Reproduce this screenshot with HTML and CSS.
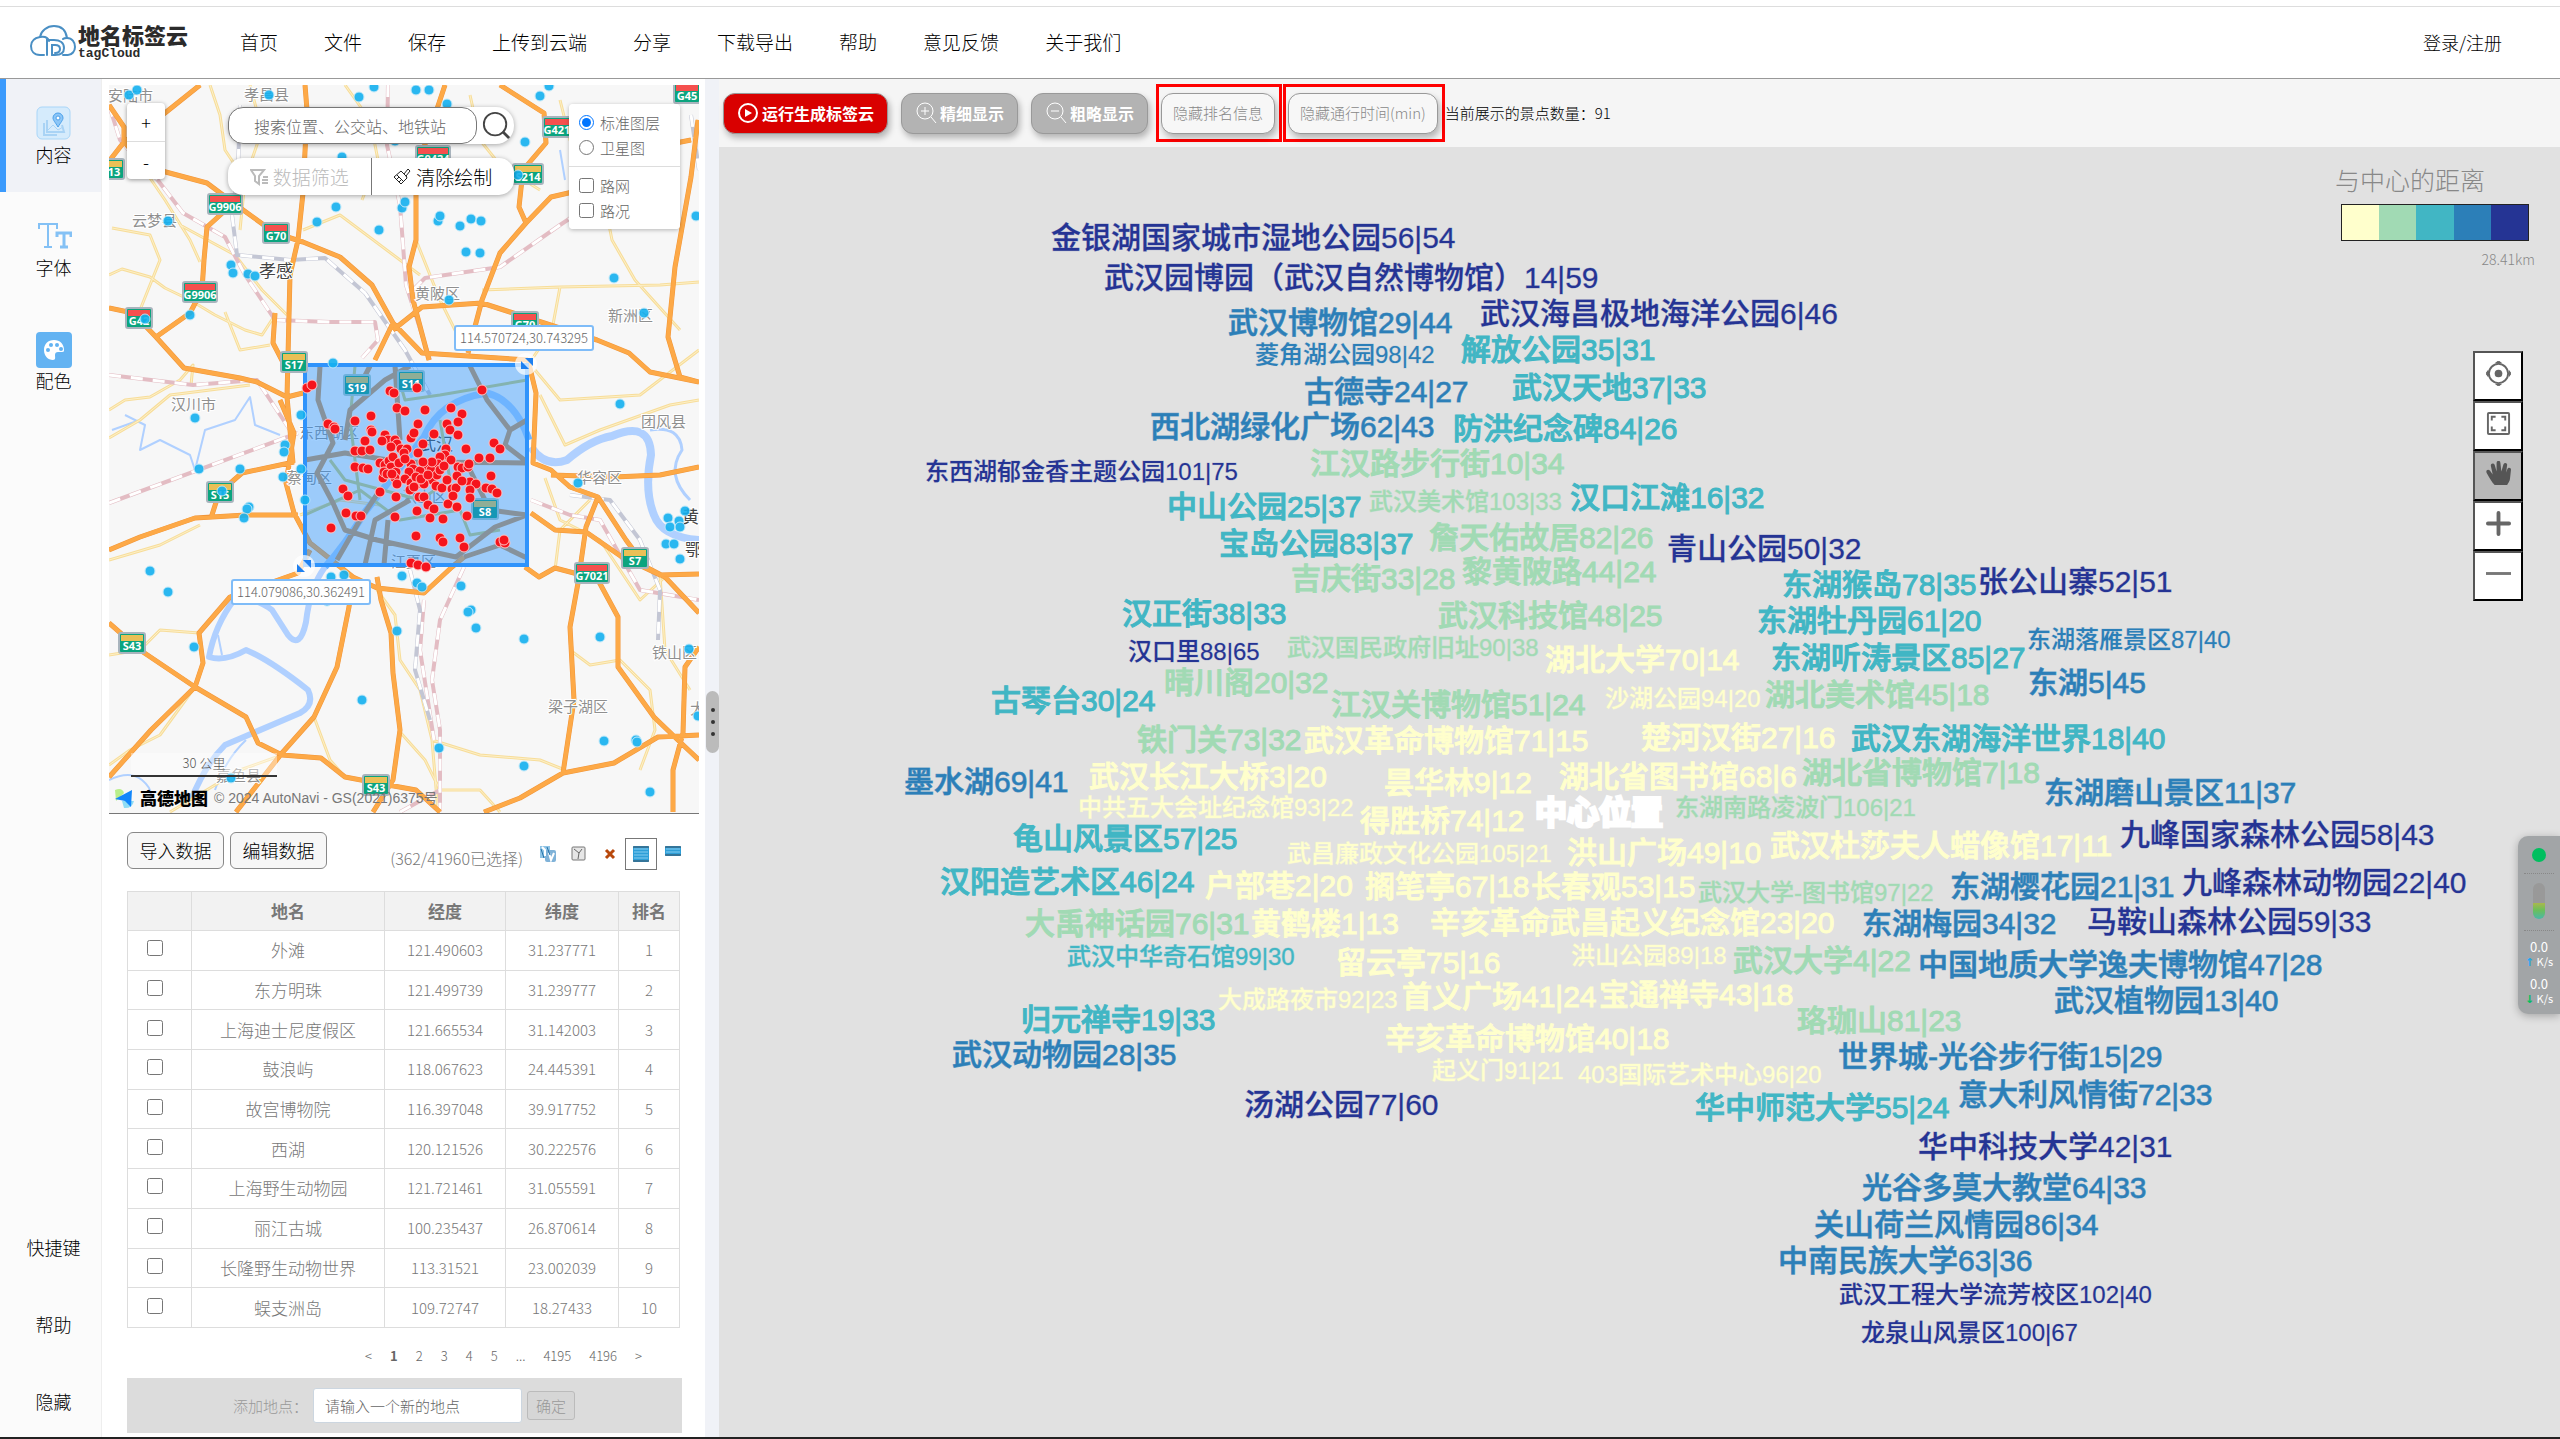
FILE: index.html
```html
<!DOCTYPE html>
<html lang="zh-CN">
<head>
<meta charset="utf-8">
<title>地名标签云</title>
<meta name="viewport" content="width=device-width, initial-scale=1">
<link rel="stylesheet" href="styles.css">
</head>
<body>
<header class="topbar">
  <a class="brand" href="#">
    <svg class="brand-mark" viewBox="0 0 46 32" fill="none" stroke="#4a8fc4" stroke-width="2" stroke-linecap="round">
      <path d="M14 30H10C4 30 1 26 1 21c0-5 4-8 9-9C11 6 17 1 24 1c8 0 12 5 13 12"/>
      <path d="M10 12c5-1 8 1 9 4"/>
      <path d="M33 30h5c4 0 7-4 7-8 0-5-3-9-8-9-2 0-3 0-4 1"/>
      <path d="M17 30V15h7c6 0 10 3 10 8s-4 7-9 7h-3"/>
      <path d="M22 30V20h3c3 0 5 1 5 4s-2 4-5 4"/>
    </svg>
    <span class="brand-text"><strong>地名标签云</strong><small>tagCloud</small></span>
  </a>
  <nav class="menu">
    <a href="#">首页</a><a href="#">文件</a><a href="#">保存</a><a href="#">上传到云端</a><a href="#">分享</a><a href="#">下载导出</a><a href="#">帮助</a><a href="#">意见反馈</a><a href="#">关于我们</a>
  </nav>
  <a class="login" href="#">登录/注册</a>
</header>

<main class="workspace">
  <nav class="rail">
    <a class="rail-item active" href="#">
      <svg viewBox="0 0 36 36"><rect x="1" y="1" width="33" height="32" rx="5" fill="#d5ebfc" stroke="#a9d6f8"/><path d="M8 17v12h13M11 14v12h17l-2-7" fill="none" stroke="#a9d3f5" stroke-width="2"/><path d="M12 24l5-5 5 5 5-3" fill="none" stroke="#a9d3f5"/><path d="M22 21c-3-5-5-7-5-9a5 5 0 0 1 10 0c0 2-2 4-5 9z" fill="#8cc6f7" stroke="#4ba0ea"/><circle cx="22" cy="12" r="2" fill="#fff" stroke="#4ba0ea"/></svg>
      <span>内容</span>
    </a>
    <a class="rail-item" href="#">
      <svg viewBox="0 0 36 36" fill="none" stroke="#84c1f5" stroke-width="2"><path d="M3 10V5h18v5M12 5v22M8 28h8"/><path d="M21 18v-4h14v4M28 14v13M24 28h8" stroke-width="3"/></svg>
      <span>字体</span>
    </a>
    <a class="rail-item" href="#">
      <svg viewBox="0 0 36 36"><rect width="36" height="36" rx="4" fill="#63b3f2"/><path d="M18 8c-6 0-10 4-10 10s4 10 9 10c3 0 2-3 2-5s1-3 3-3h4c2 0 2-1 2-2 0-6-4-10-10-10z" fill="#fff"/><g fill="#63b3f2"><circle cx="12" cy="18" r="2"/><circle cx="15" cy="13" r="2"/><circle cx="21" cy="13" r="2"/><circle cx="25" cy="17" r="2"/></g></svg>
      <span>配色</span>
    </a>
    <div class="rail-foot"><a href="#">快捷键</a><a href="#">帮助</a><a href="#">隐藏</a></div>
  </nav>

  <section class="panel">
    <div class="map">
      <svg class="map-art" viewBox="109 85 590 728">
        <defs>
          <marker id="spot" markerUnits="userSpaceOnUse" markerWidth="12" markerHeight="12" refX="6" refY="6" viewBox="0 0 12 12"><circle cx="6" cy="6" r="5" fill="#14b1f0" stroke="#bfe9fb"/></marker>
          <marker id="pick" markerUnits="userSpaceOnUse" markerWidth="12" markerHeight="12" refX="6" refY="6" viewBox="0 0 12 12"><circle cx="6" cy="6" r="5" fill="#f5141c" stroke="#ffc4c4"/></marker>
          <path id="major" d="M305 85L307 110 303 193 298 240 290 275 287 397 293 463M275 313L273 343 287 370M445 85L430 130 416 170 416 240 409 267 413 300 429 360M500 85L544 113 546 143 523 170 519 207 526 223 500 253 482 300 468 353M526 223L551 197 590 188 640 150 691 140M698 120L691 177 675 267 668 337 680 377 699 382M109 105L124 127 124 142 147 167 207 183 239 207 275 233 303 242 340 257 372 285 393 323 422 353 528 360M200 85L165 113 124 142 110 160M229 207L207 227 204 260 202 290 190 313 156 337M109 308L133 313 156 337 184 368 240 378 257 382 287 397 303 393M393 323L375 360M393 330L422 307 482 303 510 312 597 340 629 353 650 372 699 382M528 360L536 393 533 463 551 470 570 487 598 497 626 540 646 567 665 577 699 613M551 475L614 477 660 475 699 467M598 497L586 527 578 583 570 627 574 700 563 773M531 513L555 530 586 532 622 557 660 575 699 574M525 567L539 577 555 568 574 573 598 580 618 617 618 667 654 717 681 743 699 760M484 812L520 798 563 773 614 763 658 737 699 735M699 647L685 667 683 733 673 770 673 812M109 623L140 650 195 687 246 717 258 743 282 755 321 758 345 777 377 783 416 790 440 812M109 777L151 730 195 687 203 663 199 633 230 597 298 573 310 550M236 812L282 753 314 717 337 667 349 607 353 577M377 577L381 600 391 633 393 673 400 730 393 780 373 812M109 550L140 537 195 518 246 515 298 515M211 518L219 493 242 473 294 462M280 400L294 433 286 483 294 513 310 543 353 577 377 588 424 593 452 567 464 557"/>
          <path id="minor" d="M109 275L122 269 150 277 165 288 190 300 215 315 245 330 262 335 275 315M150 178L165 200 190 240 200 262M112 228L150 235 160 260 140 310M180 225L235 255 262 290 287 315M210 85L220 115 225 150 245 180 240 230M303 230L340 215 420 275M225 312L240 350 270 345M250 85L262 130 250 165M345 85L370 120 378 160 362 200M470 95L480 140 500 165 540 190M560 100L570 140 600 180 612 240 635 280 680 330M416 240L440 300 465 350M482 290L560 287 660 285 699 282M560 287L552 330 530 362M109 410L125 400 150 397 180 380 193 365 191 385M109 438L140 420 170 395 250 385M540 395L565 445 600 430 670 405 699 400M535 370L560 400 640 395 699 350M545 478L560 520 600 540 640 600 665 577M660 575L665 650 690 690M377 590L395 615 400 660 420 690 432 740 438 812M109 655L140 650 160 630 199 633M195 687L160 735 130 750 109 765M314 717L330 760 345 777M432 740L480 755 540 760 565 770M440 790L480 790 500 812M570 650L590 665 620 660 650 690 655 730 640 770M109 560L160 545 200 525M300 515L340 500 380 505M282 755L240 770 170 812M555 570L560 530 590 500M400 732L425 760 440 790"/>
          <path id="rail" d="M109 375L193 385 257 380 290 430M109 503L298 433M388 85L387 145 400 205 406 285 430 360M150 170L183 213 225 237 245 275 275 320 330 322 375 322 378 340 362 358M413 290L425 278 500 267 560 225 590 205M109 105L120 140 150 175M464 567L440 620 432 680 440 730 440 812M424 600L420 650 434 740M531 500L570 515 600 520 640 590 699 600M400 812L440 790"/>
          <path id="rail2" d="M240 105L238 170 232 215 237 255 290 260 325 258 365 293 405 350 430 395M691 115L699 170M410 570L420 610 415 670 430 720M570 495L610 500 640 540 660 590 658 640"/>
          <path id="spots" d="M129 95L137 90 269 95 359 97 374 87 416 90 429 90 447 104 540 96 549 86 525 142 342 157 395 141 518 175 336 207 317 222 379 230 402 208 405 202 438 221 440 216 460 226 471 219 481 221 466 252 480 253 168 221 231 265 233 273 248 274 255 276 190 315 145 319 449 300 614 278 644 313 696 216 333 363 195 418 301 415 285 445 284 452 199 469 240 469 301 469 283 477 222 491 305 500 249 507 247 509 244 518 620 404 578 483 150 571 168 592 194 647 331 577 344 575 402 576 417 583 422 587 461 586 471 610 468 612 476 628 397 631 524 639 600 637 362 700 439 748 524 766 604 741 636 740 637 742 650 792 231 778 689 649 685 511 668 518 679 521 670 527 680 527 666 544 674 544 680 559 698 716 327 601"/>
          <path id="picks" d="M307 388L312 385 390 391 394 393 417 388 482 390 397 408 405 411 425 410 451 408 462 414 328 424 334 427 335 429 355 421 371 416 371 430 372 432 418 424 447 424 458 422 450 430 458 435 365 441 385 435 388 440 382 441 395 440 397 444 411 438 414 433 423 444 434 434 355 451 362 451 370 450 391 447 401 449 407 449 404 453 418 453 446 449 445 455 466 449 494 443 500 449 440 457 451 460 479 458 490 458 355 467 363 468 368 469 380 463 385 465 389 461 391 467 393 457 396 472 399 463 411 464 413 469 409 472 427 467 438 464 431 470 420 471 458 467 462 468 468 467 469 464 457 476 383 478 395 478 405 479 432 480 437 475 436 486 411 483 417 484 424 484 442 488 452 489 456 488 470 482 476 484 470 490 491 476 486 488 492 489 497 493 343 489 348 496 380 492 396 497 410 490 419 497 424 497 428 505 417 511 434 509 448 504 457 507 453 496 470 498 346 513 356 516 361 516 395 517 430 518 443 519 467 516 331 528 416 536 440 538 443 542 460 538 464 547 500 542 505 543 504 540 411 563 418 565 426 567 384 472 387 474 392 474 416 477 421 479 428 475 440 470 444 466 405 459 447 480 462 481 397 484 414 487 432 462 423 462"/>
        </defs>
        <rect x="109" y="85" width="590" height="728" fill="#f7f7f7"/>
        <g fill="none" stroke="#b0d0ff" stroke-linejoin="round">
          <path stroke-width="8" d="M531 447Q545 468 567 460Q590 440 612 436Q650 420 651 455Q644 490 654 515Q662 537 699 540"/>
          <path stroke-width="3" d="M650 430Q680 425 682 450Q665 475 690 500"/>
          <path stroke-width="6" d="M325 567Q310 587 306 622Q300 650 288 635L272 610Q255 596 234 600Q215 625 209 657Q225 662 246 650Q270 660 308 690Q315 705 300 713L225 745Q205 765 191 800"/>
          <path stroke-width="2" d="M218 635L222 655M246 740Q225 760 215 790M109 780Q130 770 142 780T150 800M125 415L145 425 140 450 160 440 190 455 195 470 205 430 235 420 250 397 255 425 280 435M112 430L140 420M560 150L565 180"/>
        </g>
        <g fill="none" stroke-linejoin="round">
          <use href="#minor" stroke="#f7dd9a" stroke-width="3"/><use href="#minor" stroke="#fdf0c8" stroke-width="1"/>
          <use href="#rail" stroke="#e3bcc3" stroke-width="4"/><use href="#rail" stroke="#fff" stroke-width="3" stroke-dasharray="12 10"/>
          <use href="#rail2" stroke="#c3c6d4" stroke-width="4"/><use href="#rail2" stroke="#fff" stroke-width="3" stroke-dasharray="12 10"/>
          <use href="#major" stroke="#f1963a" stroke-width="5"/><use href="#major" stroke="#fda947" stroke-width="4"/>
        </g>
        <g class="place">
          <text x="108" y="101">安陆市</text><text x="244" y="100">孝昌县</text><text x="132" y="226">云梦县</text><text class="city" x="259" y="277">孝感</text><text x="415" y="299">黄陂区</text><text x="608" y="321">新洲区</text><text x="171" y="410">汉川市</text><text x="641" y="427">团风县</text><text x="299" y="438">东西湖区</text><text class="city" x="419" y="450">武汉</text><text x="287" y="483">蔡甸区</text><text x="402" y="502">洪山区</text><text x="391" y="567">江夏区</text><text x="577" y="483">华容区</text><text class="city" x="682" y="523">黄冈</text><text class="city" x="685" y="556">鄂州</text><text x="652" y="658">铁山区</text><text x="548" y="712">梁子湖区</text><text x="690" y="714">大冶</text><text x="216" y="781">嘉鱼县</text>
        </g>
        <rect x="305" y="365" width="222" height="200" fill="#1e90ff" fill-opacity=".42"/>
        <g fill="none" stroke-linejoin="round">
          <path stroke="#6eb4ff" stroke-width="7" d="M325 567Q345 545 365 512L424 437Q440 400 487 393Q515 400 529 440"/>
          <path stroke="#84b3b0" stroke-width="3" d="M395 366L405 400 440 395 527 380M305 515L360 490 400 520 460 510 470 535 500 530M330 460L345 480 420 500 480 460M355 366L350 420 360 500M440 420L450 480"/>
          <path stroke="#86929c" stroke-width="5" d="M320 366L318 400 333 443 317 473 333 503 345 530 377 540 456 557 495 527 527 515M305 460L345 453 400 462 527 463M345 440L350 410 385 380 410 366M370 366L355 395M470 366L487 400 510 430 505 445 527 462M510 430L527 420M365 565L375 520 410 500M337 560L360 520 380 490M384 565L388 520M470 470L490 510 527 515M464 557L500 545 527 558M395 366L400 440"/>
        </g>
        <rect x="305" y="365" width="222" height="200" fill="none" stroke="#2f93fb" stroke-width="4"/>
        <g class="shield">
          <g transform="translate(687 93)"><rect x="-13" y="-10" width="26" height="20" rx="2"/><path d="M-11-8h22v6h-22z"/><text y="7">G45</text></g>
          <g transform="translate(560 127)"><rect x="-17" y="-10" width="34" height="20" rx="2"/><path d="M-15-8h30v6h-30z"/><text y="7">G4213</text></g>
          <g transform="translate(433 156)"><rect x="-17" y="-10" width="34" height="20" rx="2"/><path d="M-15-8h30v6h-30z"/><text y="7">G0424</text></g>
          <g transform="translate(225 204)"><rect x="-17" y="-10" width="34" height="20" rx="2"/><path d="M-15-8h30v6h-30z"/><text y="7">G9906</text></g>
          <g transform="translate(276 233)"><rect x="-13" y="-10" width="26" height="20" rx="2"/><path d="M-11-8h22v6h-22z"/><text y="7">G70</text></g>
          <g transform="translate(200 292)"><rect x="-17" y="-10" width="34" height="20" rx="2"/><path d="M-15-8h30v6h-30z"/><text y="7">G9906</text></g>
          <g transform="translate(139 318)"><rect x="-13" y="-10" width="26" height="20" rx="2"/><path d="M-11-8h22v6h-22z"/><text y="7">G42</text></g>
          <g transform="translate(525 322)"><rect x="-13" y="-10" width="26" height="20" rx="2"/><path d="M-11-8h22v6h-22z"/><text y="7">G70</text></g>
          <g transform="translate(592 573)"><rect x="-17" y="-10" width="34" height="20" rx="2"/><path d="M-15-8h30v6h-30z"/><text y="7">G7021</text></g>
          <g class="prov">
            <g transform="translate(111 169)"><rect x="-13" y="-10" width="26" height="20" rx="2"/><path d="M-11-8h22v6h-22z"/><text y="7">S13</text></g>
            <g transform="translate(528 174)"><rect x="-15" y="-10" width="30" height="20" rx="2"/><path d="M-13-8h26v6h-26z"/><text y="7">S214</text></g>
            <g transform="translate(294 362)"><rect x="-13" y="-10" width="26" height="20" rx="2"/><path d="M-11-8h22v6h-22z"/><text y="7">S17</text></g>
            <g transform="translate(220 492)"><rect x="-13" y="-10" width="26" height="20" rx="2"/><path d="M-11-8h22v6h-22z"/><text y="7">S15</text></g>
            <g transform="translate(635 558)"><rect x="-13" y="-10" width="26" height="20" rx="2"/><path d="M-11-8h22v6h-22z"/><text y="7">S7</text></g>
            <g transform="translate(132 643)"><rect x="-13" y="-10" width="26" height="20" rx="2"/><path d="M-11-8h22v6h-22z"/><text y="7">S43</text></g>
            <g transform="translate(376 785)"><rect x="-13" y="-10" width="26" height="20" rx="2"/><path d="M-11-8h22v6h-22z"/><text y="7">S43</text></g>
          </g>
          <g class="inside">
            <g transform="translate(357 385)"><rect x="-13" y="-10" width="26" height="20" rx="2"/><path d="M-11-8h22v6h-22z"/><text y="7">S19</text></g>
            <g transform="translate(411 381)"><rect x="-13" y="-10" width="26" height="20" rx="2"/><path d="M-11-8h22v6h-22z"/><text y="7">S11</text></g>
            <g transform="translate(485 509)"><rect x="-13" y="-10" width="26" height="20" rx="2"/><path d="M-11-8h22v6h-22z"/><text y="7">S8</text></g>
          </g>
        </g>
        <use href="#spots" class="spots"/>
        <use href="#picks" class="picks"/>
        <g transform="translate(526 364)"><circle r="11" fill="#fff" fill-opacity=".7"/><path d="M-5-3v8h8zM-1-6h8v8z" fill="#1e80f0"/></g>
        <g transform="translate(304 566)"><circle r="11" fill="#fff" fill-opacity=".7"/><path d="M-7-2v8h8zM-1-6h8v8z" fill="#1e80f0"/></g>
      </svg>
      <output class="coord coord-ne">114.570724,30.743295</output>
      <output class="coord coord-sw">114.079086,30.362491</output>
      <div class="zoombox"><button type="button">+</button><button type="button">-</button></div>
      <form class="search">
        <input type="text" aria-label="搜索" placeholder="搜索位置、公交站、地铁站">
        <button type="button" aria-label="搜索"><svg viewBox="0 0 30 30" fill="none" stroke="#444" stroke-width="2"><circle cx="14" cy="13" r="12"/><path d="M22 21l7 7" stroke-width="3"/></svg></button>
      </form>
      <div class="draw-tools">
        <button type="button" disabled><svg viewBox="0 0 18 18" fill="none" stroke="#bbb" stroke-width="2"><path d="M1 2h13l-5 6v8l-4-3V8zM13 9h5M12 12h6M12 15h6"/></svg>数据筛选</button>
        <button type="button"><svg viewBox="0 0 18 18" fill="none" stroke="#222"><path d="M11 6l4-5 2 2-4 5 1 2-6 6-7-7 7-6zM4 7l7 7M3 12l3-3M6 14l3-3M9 4l5 5"/></svg>清除绘制</button>
      </div>
      <fieldset class="layers">
        <label><input type="radio" name="base" checked>标准图层</label>
        <label><input type="radio" name="base">卫星图</label>
        <hr>
        <label><input type="checkbox">路网</label>
        <label><input type="checkbox">路况</label>
      </fieldset>
      <div class="scale">30 公里</div>
      <div class="attribution">
        <svg viewBox="0 0 22 22"><path d="M1 3q7-3 9 3l-8 8z" fill="#b9ee8b"/><path d="M8 14h12q-2 8-10 7z" fill="#8fdcf5"/><path d="M1 12L18 3 17 20 11 14z" fill="#1186fb"/></svg>
        <b>高德地图</b><span>© 2024 AutoNavi - GS(2021)6375号</span>
      </div>
    </div>

    <div class="data">
      <div class="data-bar">
        <button type="button">导入数据</button><button type="button">编辑数据</button>
        <span class="count">(362/41960已选择)</span>
        <div class="icons">
          <button type="button" aria-label="复制"><svg viewBox="0 0 16 16"><rect width="10" height="12" fill="#8fc4e6"/><rect x="5" y="4" width="11" height="12" rx="2" fill="#7fb2d8"/><path d="M2 1l3 3v6M9 7l2 7 3-7" fill="none" stroke="#fff" stroke-width="2"/><path d="M1 3l3 9M7 1l3 8" stroke="#2371a8"/></svg></button>
          <button type="button" aria-label="筛选"><svg viewBox="0 0 16 16"><rect x="1" y="1" width="13" height="13" rx="1" fill="#e6e6e6" stroke="#777"/><path d="M3 3l5 4 3-4M8 7l-1 6" fill="none" stroke="#666"/></svg></button>
          <button type="button" aria-label="删除"><svg viewBox="0 0 16 16"><path d="M4 4l8 8M12 4l-8 8" stroke="#b8480c" stroke-width="3"/></svg></button>
          <button type="button" aria-label="列表" class="on"><svg viewBox="0 0 16 16"><rect width="16" height="16" rx="1" fill="#2f9fd8"/><path d="M1 3h14M1 6h14M1 9h14M1 12h14" stroke="#86cdf0"/><path d="M0 1h16M0 15h16" stroke="#3a4a5a"/></svg></button>
          <button type="button" aria-label="收起"><svg viewBox="0 0 16 16"><rect width="16" height="10" rx="1" fill="#2f9fd8"/><path d="M1 3h14M1 6h14" stroke="#86cdf0"/><path d="M0 1h16M0 9h16" stroke="#3a4a5a"/></svg></button>
        </div>
      </div>
      <table>
        <colgroup><col class="c1"><col class="c2"><col class="c3"><col class="c4"><col class="c5"></colgroup>
        <thead><tr><th></th><th>地名</th><th>经度</th><th>纬度</th><th>排名</th></tr></thead>
        <tbody>
          <tr><td><input type="checkbox" aria-label="外滩"></td><td>外滩</td><td>121.490603</td><td>31.237771</td><td>1</td></tr>
          <tr><td><input type="checkbox" aria-label="东方明珠"></td><td>东方明珠</td><td>121.499739</td><td>31.239777</td><td>2</td></tr>
          <tr><td><input type="checkbox" aria-label="上海迪士尼度假区"></td><td>上海迪士尼度假区</td><td>121.665534</td><td>31.142003</td><td>3</td></tr>
          <tr><td><input type="checkbox" aria-label="鼓浪屿"></td><td>鼓浪屿</td><td>118.067623</td><td>24.445391</td><td>4</td></tr>
          <tr><td><input type="checkbox" aria-label="故宫博物院"></td><td>故宫博物院</td><td>116.397048</td><td>39.917752</td><td>5</td></tr>
          <tr><td><input type="checkbox" aria-label="西湖"></td><td>西湖</td><td>120.121526</td><td>30.222576</td><td>6</td></tr>
          <tr><td><input type="checkbox" aria-label="上海野生动物园"></td><td>上海野生动物园</td><td>121.721461</td><td>31.055591</td><td>7</td></tr>
          <tr><td><input type="checkbox" aria-label="丽江古城"></td><td>丽江古城</td><td>100.235437</td><td>26.870614</td><td>8</td></tr>
          <tr><td><input type="checkbox" aria-label="长隆野生动物世界"></td><td>长隆野生动物世界</td><td>113.31521</td><td>23.002039</td><td>9</td></tr>
          <tr><td><input type="checkbox" aria-label="蜈支洲岛"></td><td>蜈支洲岛</td><td>109.72747</td><td>18.27433</td><td>10</td></tr>
        </tbody>
      </table>
      <nav class="pages"><a href="#">&lt;</a><a href="#" class="current">1</a><a href="#">2</a><a href="#">3</a><a href="#">4</a><a href="#">5</a><span>...</span><a href="#">4195</a><a href="#">4196</a><a href="#">&gt;</a></nav>
      <form class="add"><label for="new-spot">添加地点：</label><input id="new-spot" type="text" placeholder="请输入一个新的地点"><button type="button" disabled>确定</button></form>
    </div>
  </section>

  <div class="splitter"><span class="grip"><i></i><i></i><i></i></span></div>

  <section class="stage">
    <div class="toolbar">
      <button type="button" class="run"><svg viewBox="0 0 22 22" fill="none" stroke="#fff" stroke-width="2"><circle cx="11" cy="11" r="9"/><path d="M8 7l7 4-7 4z" fill="#fff" stroke="none"/></svg>运行生成标签云</button>
      <button type="button" class="gray"><svg viewBox="0 0 22 22" fill="none" stroke="#fff"><circle cx="10" cy="9" r="8"/><path d="M6 9h8M10 5v8M16 15l5 6"/></svg>精细显示</button>
      <button type="button" class="gray"><svg viewBox="0 0 22 22" fill="none" stroke="#fff"><circle cx="10" cy="9" r="8"/><path d="M6 9h8M16 15l5 6"/></svg>粗略显示</button>
      <div class="marks">
        <span class="mark"><button type="button" class="plain">隐藏排名信息</button></span>
        <span class="mark"><button type="button" class="plain">隐藏通行时间(min)</button></span>
      </div>
      <span class="total">当前展示的景点数量：91</span>
    </div>
    <div class="canvas">
      <svg class="cloud" viewBox="719 147 1841 1290">
        <g class="d5">
          <text x="1051" y="248">金银湖国家城市湿地公园56|54</text><text x="1104" y="288">武汉园博园（武汉自然博物馆）14|59</text><text x="1480" y="324">武汉海昌极地海洋公园6|46</text><text class="s" x="925" y="480">东西湖郁金香主题公园101|75</text><text x="1667" y="559">青山公园50|32</text><text class="s" x="1128" y="660">汉口里88|65</text><text x="1244" y="1115">汤湖公园77|60</text><text x="1978" y="592">张公山寨52|51</text><text x="2120" y="845">九峰国家森林公园58|43</text><text x="2182" y="893">九峰森林动物园22|40</text><text x="2087" y="932">马鞍山森林公园59|33</text><text x="1918" y="1157">华中科技大学42|31</text><text class="s" x="1839" y="1303">武汉工程大学流芳校区102|40</text><text class="s" x="1861" y="1341">龙泉山风景区100|67</text>
        </g>
        <g class="d4">
          <text x="1228" y="333">武汉博物馆29|44</text><text class="s" x="1255" y="363">菱角湖公园98|42</text><text x="1304" y="402">古德寺24|27</text><text x="1150" y="437">西北湖绿化广场62|43</text><text x="904" y="792">墨水湖69|41</text><text x="952" y="1065">武汉动物园28|35</text><text class="s" x="2027" y="648">东湖落雁景区87|40</text><text x="2028" y="693">东湖5|45</text><text x="2044" y="803">东湖磨山景区11|37</text><text x="1950" y="897">东湖樱花园21|31</text><text x="1862" y="934">东湖梅园34|32</text><text x="1918" y="975">中国地质大学逸夫博物馆47|28</text><text x="2054" y="1011">武汉植物园13|40</text><text x="1838" y="1067">世界城-光谷步行街15|29</text><text x="1958" y="1105">意大利风情街72|33</text><text x="1862" y="1198">光谷多莫大教堂64|33</text><text x="1814" y="1235">关山荷兰风情园86|34</text><text x="1778" y="1271">中南民族大学63|36</text>
        </g>
        <g class="d3">
          <text x="1461" y="360">解放公园35|31</text><text x="1512" y="398">武汉天地37|33</text><text x="1453" y="439">防洪纪念碑84|26</text><text x="1167" y="517">中山公园25|37</text><text x="1570" y="508">汉口江滩16|32</text><text x="1219" y="554">宝岛公园83|37</text><text x="1122" y="624">汉正街38|33</text><text x="991" y="711">古琴台30|24</text><text x="1013" y="849">龟山风景区57|25</text><text x="940" y="892">汉阳造艺术区46|24</text><text class="s" x="1067" y="965">武汉中华奇石馆99|30</text><text x="1021" y="1030">归元禅寺19|33</text><text x="1695" y="1118">华中师范大学55|24</text><text x="1782" y="595">东湖猴岛78|35</text><text x="1757" y="631">东湖牡丹园61|20</text><text x="1771" y="668">东湖听涛景区85|27</text><text x="1851" y="749">武汉东湖海洋世界18|40</text>
        </g>
        <g class="d2">
          <text x="1310" y="474">江汉路步行街10|34</text><text class="s" x="1369" y="510">武汉美术馆103|33</text><text x="1429" y="548">詹天佑故居82|26</text><text x="1291" y="589">吉庆街33|28</text><text x="1462" y="582">黎黄陂路44|24</text><text x="1438" y="626">武汉科技馆48|25</text><text class="s" x="1287" y="656">武汉国民政府旧址90|38</text><text x="1164" y="693">晴川阁20|32</text><text x="1331" y="715">江汉关博物馆51|24</text><text x="1137" y="750">铁门关73|32</text><text x="1025" y="934">大禹神话园76|31</text><text x="1733" y="971">武汉大学4|22</text><text x="1765" y="705">湖北美术馆45|18</text><text x="1802" y="783">湖北省博物馆7|18</text><text class="s" x="1675" y="816">东湖南路凌波门106|21</text><text class="s" x="1698" y="901">武汉大学-图书馆97|22</text><text x="1797" y="1031">珞珈山81|23</text>
        </g>
        <g class="d1">
          <text x="1545" y="670">湖北大学70|14</text><text class="s" x="1605" y="707">沙湖公园94|20</text><text x="1304" y="751">武汉革命博物馆71|15</text><text x="1641" y="748">楚河汉街27|16</text><text x="1089" y="787">武汉长江大桥3|20</text><text x="1384" y="793">昙华林9|12</text><text x="1559" y="787">湖北省图书馆68|6</text><text class="s" x="1078" y="816">中共五大会址纪念馆93|22</text><text x="1360" y="831">得胜桥74|12</text><text class="s" x="1287" y="862">武昌廉政文化公园105|21</text><text x="1567" y="863">洪山广场49|10</text><text x="1205" y="896">户部巷2|20</text><text x="1365" y="897">搁笔亭67|18</text><text x="1531" y="897">长春观53|15</text><text x="1251" y="934">黄鹤楼1|13</text><text x="1430" y="933">辛亥革命武昌起义纪念馆23|20</text><text x="1336" y="973">留云亭75|16</text><text class="s" x="1571" y="964">洪山公园89|18</text><text class="s" x="1218" y="1008">大成路夜市92|23</text><text x="1402" y="1007">首义广场41|24</text><text x="1599" y="1005">宝通禅寺43|18</text><text x="1385" y="1049">辛亥革命博物馆40|18</text><text class="s" x="1432" y="1079">起义门91|21</text><text class="s" x="1578" y="1083">403国际艺术中心96|20</text><text x="1770" y="856">武汉杜莎夫人蜡像馆17|11</text>
        </g>
        <text class="centre" x="1535" y="824">中心位置</text>
      </svg>
      <div class="legend">
        <h2>与中心的距离</h2>
        <div class="swatches"><i class="b1"></i><i class="b2"></i><i class="b3"></i><i class="b4"></i><i class="b5"></i></div>
        <p>28.41km</p>
      </div>
      <div class="view-tools">
        <button type="button" aria-label="定位"><svg viewBox="0 0 26 26" fill="none" stroke="#666" stroke-width="2"><circle cx="13" cy="13" r="10"/><circle cx="13" cy="13" r="4" fill="#666" stroke="none"/><path d="M10 2l3-2 3 2zM10 24l3 2 3-2zM2 10l-2 3 2 3zM24 10l2 3-2 3z" fill="#666" stroke-width="1"/></svg></button>
        <button type="button" aria-label="全屏"><svg viewBox="0 0 26 26" fill="none" stroke="#666" stroke-width="2"><rect x="2" y="2" width="22" height="22" rx="1"/><path d="M6 10V6h4M16 6h4v4M20 16v4h-4M10 20H6v-4"/></svg></button>
        <button type="button" aria-label="拖动" class="on"><svg viewBox="0 0 26 26"><path d="M9 25C6 22 4 18 1 13c-2-3 1-5 3-3l3 4L5 5c0-3 3-3 4-1l2 7V2c0-3 4-3 4 0l1 9 2-7c1-3 4-2 4 0l-1 8 1-3c1-3 4-2 4 0l-1 9c0 3-2 5-3 7z" fill="#555"/></svg></button>
        <button type="button" aria-label="放大"><svg viewBox="0 0 26 26" stroke="#666" stroke-width="4" stroke-linecap="round"><path d="M2 13h22M13 2v22"/></svg></button>
        <button type="button" aria-label="缩小"><svg viewBox="0 0 26 26" stroke="#777" stroke-width="3"><path d="M0 13h26"/></svg></button>
      </div>
      <aside class="netmeter">
        <i class="lamp"></i><hr><i class="tube"></i><hr>
        <p>0.0<span><b class="up">↑</b> K/s</span></p>
        <p>0.0<span><b class="down">↓</b> K/s</span></p>
      </aside>
    </div>
  </section>
</main>
</body>
</html>
```
FILE: styles.css
```css
* { box-sizing: border-box; }
body {
  margin: 0;
  min-height: 100vh;
  display: flex;
  flex-direction: column;
  border-bottom: 2px solid #222;
  background: #fff;
  color: #000;
  font: 300 18px/24px "Noto Sans CJK SC", "Noto Sans", sans-serif;
}
a { color: inherit; text-decoration: none; }
button, input { font: inherit; color: inherit; }
button { display: flex; align-items: center; justify-content: center; padding: 0; }
svg { display: block; }

/* header */
.topbar {
  margin-top: 6px;
  height: 73px;
  display: flex;
  align-items: center;
  padding: 0 58px 2px 30px;
  border-top: 1px solid #ddd;
  border-bottom: 1px solid #999;
  font-size: 19px;
}
.brand { display: flex; align-items: center; gap: 2px; width: 210px; padding-bottom: 2px; }
.brand-mark { width: 46px; height: 32px; }
.brand-text { display: flex; flex-direction: column; color: #2b2b2b; }
.brand-text strong { font-size: 22px; line-height: 26px; font-weight: 900; }
.brand-text small { font: bold 13px/14px "Liberation Mono", monospace; }
.menu { display: flex; flex: 1; gap: 46px; }
.login { font-size: 18px; }

.workspace { flex: 1; display: flex; }

/* left rail */
.rail {
  width: 102px;
  display: flex;
  flex-direction: column;
  background: #fbfbfb;
  border-right: 1px solid #eee;
}
.rail-item {
  height: 113px;
  display: flex;
  flex-direction: column;
  align-items: center;
  justify-content: center;
  padding: 0 0 0 6px;
}
.rail-item svg { width: 36px; height: 36px; }
.rail-item.active { background: #f0f2f7; border-left: 6px solid #3b9afc; padding-left: 0; }
.rail-foot {
  flex: 1;
  display: flex;
  flex-direction: column;
  justify-content: flex-end;
  align-items: center;
  gap: 53px;
  padding: 0 0 24px 6px;
}

/* map */
.panel { width: 603px; padding: 6px 6px 0 7px; }
.map { position: relative; border-bottom: 1px solid #777; overflow: hidden; }
.map-art { width: 100%; height: auto; }
.spots { fill: none; marker: url(#spot); opacity: .9; }
.picks { fill: none; marker: url(#pick); }
.place { font-size: 15px; font-weight: 400; fill: #8f8f8f; stroke: #fff; stroke-width: 2px; paint-order: stroke; }
.place .city { fill: #444; font-size: 17px; }
.shield rect { fill: #0ba47e; stroke: #a9b4bd; stroke-width: 2px; }
.shield path { fill: #f5504e; }
.shield .prov path { fill: #eac056; }
.shield .inside rect { fill: #1597b5; stroke: #6db0dc; }
.shield .inside path { fill: #8fae96; }
.shield text { font: bold 11px "Noto Sans", sans-serif; fill: #fff; text-anchor: middle; }
.coord {
  position: absolute;
  padding: 0 4px;
  border: 2px solid #7fbcf8;
  border-radius: 3px;
  background: #fff;
  color: #666;
  font-size: 13px;
  line-height: 22px;
}
.coord-ne { left: 345px; top: 240px; }
.coord-sw { left: 122px; top: 494px; }
.zoombox {
  position: absolute; left: 18px; top: 18px; width: 38px;
  border-radius: 4px; background: #fff; box-shadow: 0 1px 4px #0006;
}
.zoombox button { width: 38px; height: 38px; border: 0; background: none; font-size: 18px; }
.zoombox button + button { border-top: 1px solid #ddd; }
.search {
  position: absolute; left: 119px; top: 22px; width: 286px; height: 37px;
  display: flex; border-radius: 18px; background: #fff; box-shadow: 0 1px 5px #0005;
}
.search input {
  flex: 1; min-width: 0; padding: 0 25px; border: 1px solid #777; border-radius: 15px;
  background: #fff; font-size: 16px;
}
.search button { width: 37px; border: 0; background: none; }
.search svg { width: 28px; height: 28px; }
::placeholder { color: #666; opacity: 1; }
.draw-tools {
  position: absolute; left: 119px; top: 73px; width: 286px; height: 37px;
  display: flex; border-radius: 15px; background: #fff; box-shadow: 0 1px 5px #0005;
}
.draw-tools button { flex: 1; gap: 5px; border: 0; background: none; font-size: 19px; color: #000; }
.draw-tools button + button { border-left: 1px solid #777; }
.draw-tools button:disabled { color: #bbb; }
.draw-tools svg { width: 18px; height: 18px; }
.layers {
  position: absolute; left: 460px; top: 19px; width: 111px; margin: 0; padding: 6px 0;
  border: 0; border-radius: 4px; background: #fff; box-shadow: 0 1px 4px #0004;
  color: #666; font-size: 15px; line-height: 25px;
}
.layers label { display: flex; align-items: center; gap: 6px; padding-left: 10px; }
.layers input { width: 15px; height: 15px; margin: 0; }
.layers hr { margin: 6px 0; border: 0; border-top: 1px solid #ddd; }
.scale {
  position: absolute; left: 22px; top: 668px; width: 146px; height: 24px;
  border-bottom: 2px solid #333; background: #fff6; color: #555;
  font-size: 13px; line-height: 20px; text-align: center;
}
.attribution {
  position: absolute; left: 5px; bottom: 3px; display: flex; align-items: center; gap: 4px;
}
.attribution svg { width: 22px; height: 22px; }
.attribution b { font-size: 17px; font-weight: 900; }
.attribution span { margin-left: 2px; color: #777; font: 14px/24px "Liberation Sans", "Noto Sans CJK SC", sans-serif; }

/* data table */
.data { padding: 18px 18px 0; }
.data-bar { display: flex; align-items: flex-start; gap: 6px; height: 59px; }
.data-bar > button { width: 97px; height: 37px; padding-bottom: 2px; border: 1px solid #888; border-radius: 6px; background: #f7f7f7; }
.count { margin: 14px 3px 0 auto; color: #777; font-size: 16px; }
.icons { display: flex; align-items: center; margin-top: 6px; }
.icons button { width: 31px; height: 32px; border: 0; background: none; }
.icons button:last-child { justify-content: flex-end; width: 24px; }
.icons svg { width: 16px; height: 16px; }
.icons .on { width: 32px; border: 1px solid #777; }
table { width: 553px; height: 437px; border-collapse: collapse; table-layout: fixed; text-align: center; color: #777; font-size: 17px; }
.c1 { width: 64px; } .c2 { width: 193px; } .c3 { width: 121px; } .c4 { width: 113px; }
th, td { height: 39px; padding: 0; border: 1px solid #ddd; }
th { background: #f2f2f2; font-weight: 700; }
td input { display: block; width: 16px; height: 16px; margin: 0 auto 4px 19px; }
td:nth-child(n+3) { font-size: 15px; }
.pages { display: flex; justify-content: flex-end; gap: 18px; padding: 16px 39px 10px 0; color: #666; font-size: 13px; }
.pages .current { font-weight: 700; }
.add { display: flex; align-items: center; height: 55px; margin-right: -1px; padding-right: 107px; justify-content: flex-end; gap: 5px; background: #dcdcdc; color: #999; font-size: 15px; }
.add input { width: 209px; height: 35px; padding: 0 11px; border: 1px solid #ccd6e0; border-radius: 3px; background: #fff; }
.add button { width: 48px; height: 29px; border: 1px solid #bbb; border-radius: 3px; background: #d6d6d6; color: #999; }

.splitter { width: 14px; display: flex; align-items: center; background: #f0f2f7; }
.grip { width: 13px; height: 62px; margin: 0 0 72px 1px; border-radius: 7px; background: #bbb; display: flex; flex-direction: column; align-items: center; justify-content: center; gap: 8px; }
.grip i { width: 4px; height: 4px; border-radius: 2px; background: #333; }

/* stage */
.stage { flex: 1; display: flex; flex-direction: column; min-width: 0; background: #e1e1e1; }
.toolbar { height: 68px; display: flex; align-items: center; padding-left: 4px; gap: 13px; background: #f5f5f5; }
.toolbar button { height: 41px; border: 1px solid #999; border-radius: 12px; box-shadow: 2px 4px 6px #0004; font-size: 16px; white-space: nowrap; }
.toolbar svg { width: 22px; height: 22px; }
.toolbar .run { width: 165px; gap: 3px; background: #d90000; color: #fff; font-weight: 700; }
.toolbar .gray { width: 117px; gap: 3px; background: #b3b3b3; color: #fff; font-weight: 700; }
.marks { display: flex; margin-left: -5px; gap: 1px; }
.mark { height: 58px; display: flex; align-items: center; padding: 0 4px 0 2px; border: 3px solid #f00; }
.toolbar .plain { padding: 0 11px; background: #f7f7f7; color: #888; font-size: 15px; }
.total { margin-left: -13px; font-size: 15px; }
.canvas { position: relative; flex: 1; }
.cloud { width: 100%; height: auto; font: 500 30px "Liberation Sans", "Noto Sans CJK SC", sans-serif; stroke-width: 1px; }
.d1 { fill: #ffffcc; stroke: #ffffcc; }
.d2 { fill: #a1dab4; stroke: #a1dab4; }
.d3 { fill: #41b6c4; stroke: #41b6c4; }
.d4 { fill: #2c7fb8; stroke: #2c7fb8; stroke-opacity: .7; }
.d5 { fill: #253494; stroke: #253494; stroke-opacity: .3; }
.s { font-size: 24px; stroke-opacity: .4; }
.d4 .s, .d5 .s { stroke-opacity: .2; }
.centre { font-size: 32px; font-weight: 700; fill: #fff; stroke: #fff; stroke-width: 3px; }
.legend { position: absolute; top: 15px; right: 25px; width: 200px; color: #888; }
.legend h2 { margin: 0 0 8px; font-size: 25px; line-height: 34px; font-weight: 300; }
.swatches { display: flex; width: 188px; height: 37px; margin-left: 6px; border: 1px solid #222; }
.swatches i { flex: 1; }
.b1 { background: #ffffcc; } .b2 { background: #a1dab4; } .b3 { background: #41b6c4; } .b4 { background: #2c7fb8; } .b5 { background: #253494; }
.legend p { margin: 6px 0 0; font-size: 14px; text-align: right; }
.view-tools { position: absolute; top: 204px; right: 37px; width: 50px; }
.view-tools button { width: 50px; height: 50px; padding-bottom: 6px; background: #fff; border: 2px solid; border-color: #555 #000 #000 #555; }
.view-tools svg { width: 25px; height: 25px; }
.view-tools .on { background: #b8b8b8; }
.netmeter {
  position: absolute; right: 0; top: 689px; width: 42px; height: 178px; padding-top: 12px;
  border-radius: 10px 0 0 10px; background: #a2a5a7; box-shadow: 0 2px 8px #0004;
  color: #fff; display: flex; flex-direction: column; align-items: center;
}
.netmeter hr { width: 30px; margin: 11px 0 9px; border: 0; border-top: 1px dotted #888; }
.lamp { width: 14px; height: 14px; border-radius: 7px; background: #00bf5f; }
.tube { width: 12px; height: 36px; border-radius: 6px; background: linear-gradient(#999 55%, #a8b84e 56%, #6cbf5a 75%, #4bb8a8); }
.netmeter p { margin: 0 0 7px; font-size: 13px; line-height: 14px; font-weight: 400; text-align: center; }
.netmeter span { display: block; font-size: 11px; }
.netmeter b { font-family: "DejaVu Sans", sans-serif; }
.up { color: #1ea7f0; } .down { color: #00bf5f; }
```
